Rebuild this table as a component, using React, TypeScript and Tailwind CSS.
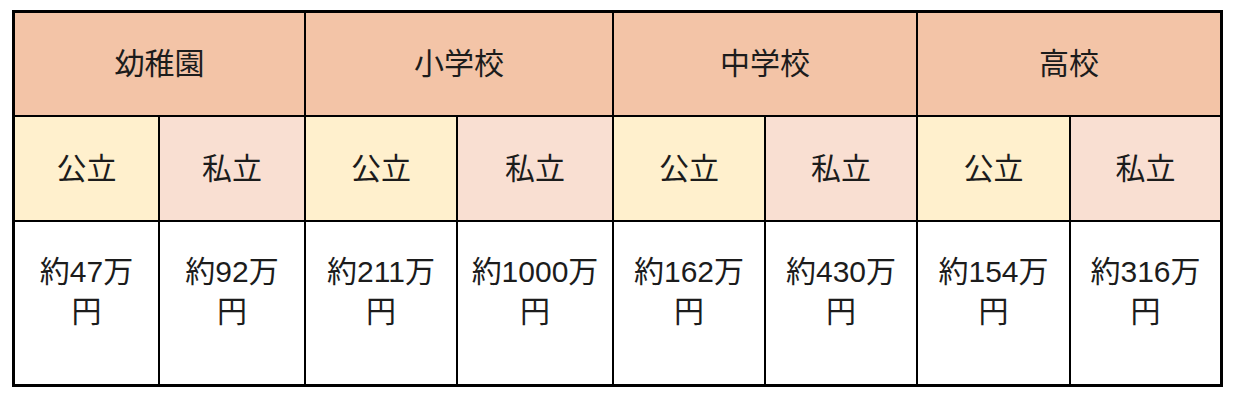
import React from "react";

const schools = ["幼稚園", "小学校", "中学校", "高校"];
const values = [
  "約47万",
  "約92万",
  "約211万",
  "約1000万",
  "約162万",
  "約430万",
  "約154万",
  "約316万",
];

export default function App() {
  return (
    <div className="w-[1236px] h-[402px] bg-white pt-[10px] pl-[12px]">
      <div
        className="grid w-[1211px] bg-black p-[3px] gap-[2px] grid-cols-[143px_144px_150px_154px_150px_150px_151px_149px] grid-rows-[102px_103px_162px] text-[#1c1c1c] text-[30px] leading-[40px]"
        style={{ fontFamily: '"Liberation Sans", "Noto Sans CJK JP", sans-serif' }}
      >
        {schools.map((s) => (
          <div key={s} className="col-span-2 bg-[#f3c4a7] flex items-center justify-center">
            {s}
          </div>
        ))}
        {schools.map((s) => (
          <React.Fragment key={s + "-sub"}>
            <div className="bg-[#fff0cd] flex items-center justify-center">公立</div>
            <div className="bg-[#f9dfd2] flex items-center justify-center">私立</div>
          </React.Fragment>
        ))}
        {values.map((v, i) => (
          <div key={i} className="bg-white text-center pt-[30px]">
            {v}
            <br />円
          </div>
        ))}
      </div>
    </div>
  );
}
